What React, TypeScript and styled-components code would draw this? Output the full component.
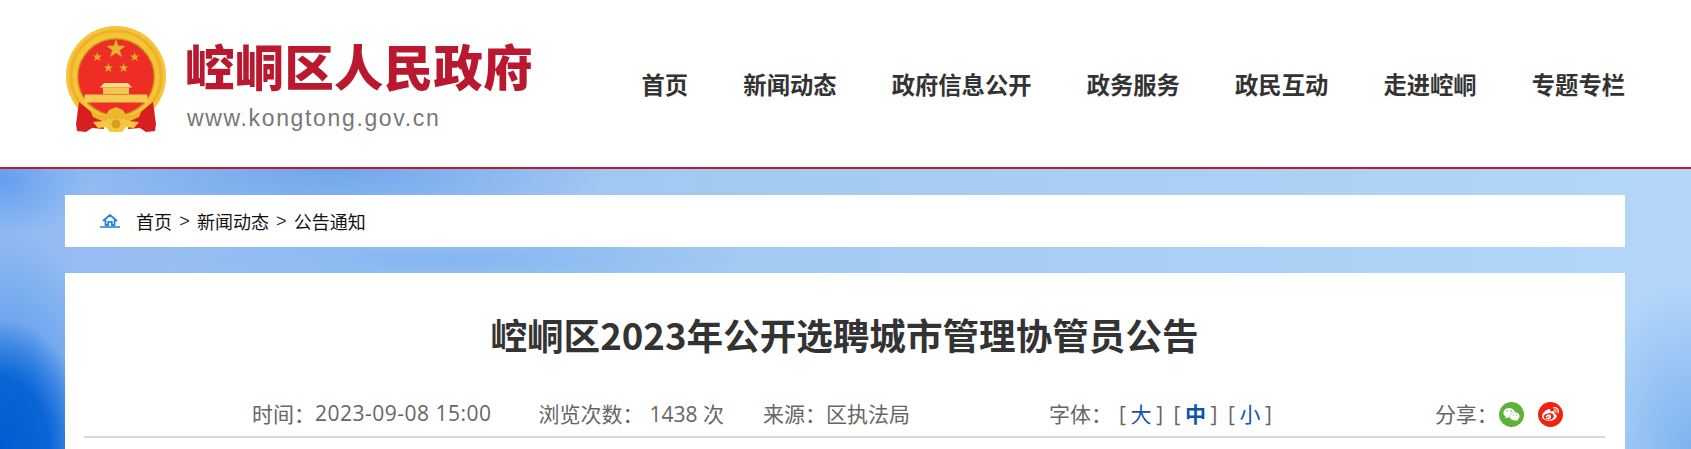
import React from 'react';
import styled, { createGlobalStyle } from 'styled-components';
import { FaWeibo, FaWeixin } from 'react-icons/fa';

const CJK = `"Noto Sans CJK SC", "Noto Sans", sans-serif`;
const BODY = `"Open Sans", "Noto Sans CJK SC", sans-serif`;

const GlobalStyle = createGlobalStyle`
    html, body {
        margin: 0;
        height: 449px;
        overflow: hidden;
        background: #fff;
    }
`;

const Header = styled.header`
    align-items: flex-start;
    background: #fff;
    border-bottom: 2px solid #bd1a2d;
    box-sizing: border-box;
    display: flex;
    height: 169px;
    justify-content: space-between;
    margin: 0;
    padding: 26px 66px 0;
`;

const Brand = styled.div`
    align-items: flex-start;
    display: flex;
    gap: 19px;
`;

const BrandText = styled.div`
    display: flex;
    flex-direction: column;
`;

const BrandName = styled.div`
    color: #b9182f;
    font-family: ${CJK};
    font-size: 49.3px;
    font-weight: 900;
    letter-spacing: 0.4px;
    line-height: 58px;
    margin-top: 10px;
    white-space: nowrap;
`;

const BrandUrl = styled.div`
    color: #777;
    font-family: "Liberation Sans", sans-serif;
    font-size: 23px;
    letter-spacing: 1.65px;
    line-height: 26px;
    margin: 11px 0 0 2px;
`;

const Nav = styled.nav`
    align-items: center;
    display: flex;
    gap: 55.2px;
    height: 62px;
    margin: 27px 0 0;
`;

const NavItem = styled.a`
    color: #333;
    font-family: ${CJK};
    font-size: 23.3px;
    font-weight: 700;
    white-space: nowrap;
`;

const Main = styled.main`
    background:
        radial-gradient(ellipse 90px 130px at 0px 280px, #005bd0 0%, #0a66d6 55%, rgba(10, 102, 214, 0) 100%),
        radial-gradient(ellipse 130px 220px at 0px 280px, rgba(40, 125, 228, 0.8) 0%, rgba(40, 125, 228, 0) 100%),
        radial-gradient(ellipse 280px 70px at 330px 0px, rgba(105, 160, 235, 0.85) 0%, rgba(105, 160, 235, 0) 100%),
        radial-gradient(ellipse 90px 60px at 0px 10px, rgba(95, 155, 238, 0.9) 0%, rgba(95, 155, 238, 0) 100%),
        radial-gradient(ellipse 300px 30px at 450px 90px, rgba(125, 178, 240, 0.8) 0%, rgba(125, 178, 240, 0) 100%),
        radial-gradient(ellipse 110px 170px at 1691px 280px, #7eb2f0 0%, rgba(126, 178, 240, 0) 100%),
        linear-gradient(90deg, #93bbf3 0%, #9cc3f3 22%, #a2caf1 42%, #a8cdf3 60%, #aed3f6 85%, #b4d7f9 100%);
    box-sizing: border-box;
    height: 280px;
    overflow: hidden;
    padding: 26px 66px 0 65px;
`;

const Breadcrumb = styled.div`
    align-items: center;
    background: #fff;
    box-sizing: border-box;
    color: #111;
    display: flex;
    font-family: ${CJK};
    font-size: 18px;
    height: 52px;
    padding-left: 35px;
`;

const HomeIcon = styled.svg`
    flex: none;
    height: 14px;
    margin-right: 16px;
    width: 20px;
`;

const Crumb = styled.span`
    white-space: nowrap;
`;

const CrumbSep = styled.span`
    color: #333;
    font-family: "Liberation Sans", sans-serif;
    margin: 0 7.2px;
`;

const Article = styled.article`
    background: #fff;
    height: 200px;
    margin-top: 26px;
    padding: 0 20px 0 19px;
`;

const Title = styled.h1`
    color: #333;
    font-family: ${CJK};
    font-size: 36.6px;
    font-weight: 700;
    line-height: 50px;
    margin: 0;
    padding-top: 37px;
    text-align: center;
`;

const MetaRow = styled.div`
    align-items: center;
    border-bottom: 2px solid #d9d9d9;
    box-sizing: border-box;
    color: #666;
    display: flex;
    font-family: ${BODY};
    font-size: 21px;
    height: 49px;
    margin-top: 29px;
    padding-left: 168px;
    padding-top: 1px;
`;

const MetaGroup = styled.span<{ $left?: number }>`
    align-items: center;
    display: flex;
    margin-left: ${props => props.$left || 0}px;
    white-space: nowrap;
`;

const DateValue = styled.span`
    letter-spacing: 0.5px;
`;

const ViewCount = styled.span`
    margin-left: 6px;
`;

const SizeLinks = styled.span`
    align-items: center;
    display: flex;
    gap: 10.5px;
    margin-left: 7px;
`;

const SizeLink = styled.span<{ $active?: boolean }>`
    color: #666;

    b {
        color: #0d55a8;
        font-weight: ${props => (props.$active ? 700 : 400)};
        margin: 0 4.6px;
    }
`;

const ShareIcon = styled.span<{ $color: string; $left: number }>`
    align-items: center;
    background: ${props => props.$color};
    border-radius: 50%;
    color: #fff;
    display: flex;
    font-size: 17px;
    height: 25px;
    justify-content: center;
    margin-left: ${props => props.$left}px;
    margin-top: 2px;
    width: 25px;
`;

const starPoints = (cx: number, cy: number, r: number) => {
    const points: string[] = [];
    for (let i = 0; i < 10; i++) {
        const radius = i % 2 === 0 ? r : r * 0.4;
        const angle = -Math.PI / 2 + (i * Math.PI) / 5;
        points.push(`${cx + radius * Math.cos(angle)},${cy + radius * Math.sin(angle)}`);
    }
    return points.join(' ');
};

const Emblem = () => (
    <svg width="100" height="107" viewBox="0 0 100 107" style={{ flex: 'none' }}>
        <circle cx="50" cy="50" r="50" fill="#f6c436" />
        <circle cx="50" cy="50" r="45" fill="none" stroke="#ecb22c" strokeWidth="3" />
        <circle cx="50" cy="51" r="39" fill="#c8911f" />
        <circle cx="50" cy="51" r="37.6" fill="#ee2d24" />
        <polygon points={starPoints(50, 23, 10)} fill="#e9b431" stroke="#b8861c" strokeWidth="0.5" />
        <polygon points={starPoints(31.3, 31, 5)} fill="#e3ac30" />
        <polygon points={starPoints(68.7, 31, 5)} fill="#e3ac30" />
        <polygon points={starPoints(42.3, 42, 5)} fill="#e3ac30" />
        <polygon points={starPoints(57.7, 42, 5)} fill="#e3ac30" />
        <path d="M38 57h24l4 4.5H34z" fill="#f8dc8c" />
        <path d="M37 61.5h26V68H37z" fill="#f3c64f" />
        <path d="M19 68.5h62l1.5 8h-65z" fill="#f5cb55" />
        <path d="M13 76L24 85L36 91L38 103L26 102L20 106L11 105L10 98z" fill="#d81e1e" />
        <path d="M87 76L76 85L64 91L62 103L74 102L80 106L89 105L90 98z" fill="#d81e1e" />
        <path d="M24 84c6 4 11 6 16 5l3-5 7-3 7 3 3 5c5 1 10-1 16-5l-3 7-11 5H38l-11-5z" fill="#eeb52f" />
        <path d="M27 96l11-1 4-2h16l4 2 11 1-5 6-8-1-4 5H44l-4-5-8 1z" fill="#f5c93f" />
        <circle cx="50" cy="98" r="4.5" fill="#dc9c22" />
    </svg>
);

const navItems = ['首页', '新闻动态', '政府信息公开', '政务服务', '政民互动', '走进崆峒', '专题专栏'];

export default function App() {
    return (
        <>
            <GlobalStyle />
            <Header>
                <Brand>
                    <Emblem />
                    <BrandText>
                        <BrandName>崆峒区人民政府</BrandName>
                        <BrandUrl>www.kongtong.gov.cn</BrandUrl>
                    </BrandText>
                </Brand>
                <Nav>
                    {navItems.map(item => (
                        <NavItem key={item}>{item}</NavItem>
                    ))}
                </Nav>
            </Header>
            <Main>
                <Breadcrumb>
                    <HomeIcon viewBox="0 0 20 14">
                        <path
                            d="M10 1L3.5 6.5H5.5V11H8.2V7.8H11.8V11H14.5V6.5H16.5L10 1Z"
                            fill="none"
                            stroke="#2b84d8"
                            strokeWidth="1.8"
                            strokeLinejoin="round"
                        />
                        <rect x="0" y="12.2" width="20" height="1.6" fill="#2b84d8" />
                    </HomeIcon>
                    <Crumb>首页</Crumb>
                    <CrumbSep>&gt;</CrumbSep>
                    <Crumb>新闻动态</Crumb>
                    <CrumbSep>&gt;</CrumbSep>
                    <Crumb>公告通知</Crumb>
                </Breadcrumb>
                <Article>
                    <Title>崆峒区2023年公开选聘城市管理协管员公告</Title>
                    <MetaRow>
                        <MetaGroup>
                            时间：<DateValue>2023-09-08 15:00</DateValue>
                        </MetaGroup>
                        <MetaGroup $left={47}>
                            浏览次数：<ViewCount>1438 次</ViewCount>
                        </MetaGroup>
                        <MetaGroup $left={39}>
                            来源：区执法局
                        </MetaGroup>
                        <MetaGroup $left={139}>
                            字体：
                            <SizeLinks>
                                <SizeLink>[<b>大</b>]</SizeLink>
                                <SizeLink $active>[<b>中</b>]</SizeLink>
                                <SizeLink>[<b>小</b>]</SizeLink>
                            </SizeLinks>
                        </MetaGroup>
                        <MetaGroup $left={163}>
                            分享：
                            <ShareIcon $color="#5fb13c" $left={1}>
                                <FaWeixin />
                            </ShareIcon>
                            <ShareIcon $color="#f0230f" $left={14}>
                                <FaWeibo />
                            </ShareIcon>
                        </MetaGroup>
                    </MetaRow>
                </Article>
            </Main>
        </>
    );
}
